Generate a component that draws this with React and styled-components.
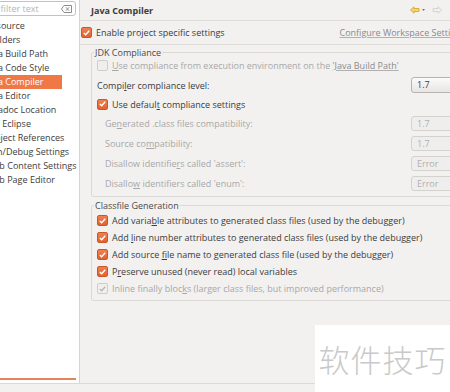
import React from "react";
import styled, { createGlobalStyle } from "styled-components";

const GlobalStyle = createGlobalStyle`
  html, body {
    margin: 0;
    padding: 0;
    background: #f2f1f0;
  }
  body {
    font-family: "Open Sans", "DejaVu Sans", sans-serif;
    font-size: 9px;
    color: #3c3c3c;
  }
  u {
    text-decoration-thickness: 1px;
    text-underline-offset: 1px;
  }
`;

const Window = styled.div`
  position: relative;
  width: 450px;
  height: 392px;
  display: flex;
  flex-direction: column;
  overflow: hidden;
  background: #f2f1f0;
`;

const Body = styled.div`
  display: flex;
  height: 383px;
`;

const BottomBar = styled.div`
  flex: 1;
  background: #f2f1f0;
  border-top: 1px solid #dcdad6;
`;

// left tree, scrolled so that its left part is cut away
const Sidebar = styled.div`
  width: 79px;
  flex: none;
  background: #fff;
  border-right: 1px solid #d6d4d0;
  display: flex;
  flex-direction: column;
  overflow: hidden;
`;

const Filter = styled.div`
  margin: 1px 3px 0 -26px;
  height: 13px;
  border: 1px solid #c4c2be;
  border-radius: 3px;
  display: flex;
  align-items: center;
  justify-content: space-between;
  padding: 0 3px 0 5px;
  color: #b4b4b4;
  flex: none;
`;

const Tree = styled.div`
  margin-top: 3px;
  margin-left: ${(p) => p.shift}px;
  display: flex;
  flex-direction: column;
`;

const TreeRow = styled.div`
  height: 14px;
  line-height: 14px;
  white-space: nowrap;
  padding-left: 3px;
  margin-right: ${(p) => -p.shift}px;
  background: ${(p) => (p.selected ? "#f07746" : "transparent")};
  color: ${(p) => (p.selected ? "#fff" : "#3c3c3c")};
`;

const ScrollThumb = styled.div`
  margin-top: auto;
  margin-bottom: 3px;
  height: 2px;
  width: 76px;
  background: #e8825a;
`;

const Main = styled.div`
  flex: 1;
  overflow: hidden;
  display: flex;
  flex-direction: column;
`;

const Inner = styled.div`
  width: 392px;
  display: flex;
  flex-direction: column;
`;

const Header = styled.div`
  height: 20px;
  display: flex;
  align-items: center;
  justify-content: space-between;
  padding: 0 8px 0 11px;
  border-bottom: 1px solid #dedcd8;
  width: 351px;
`;

const Title = styled.div`
  font-weight: 700;
`;

const Nav = styled.div`
  display: flex;
  align-items: center;
  gap: 4px;
`;

const TopRow = styled.div`
  display: flex;
  align-items: center;
  justify-content: space-between;
  padding: 5px 0 5px 1px;
  border-bottom: 1px solid #dedcd8;
`;

const Link = styled.span`
  color: #8a8a8a;
  text-decoration: underline;
  text-decoration-color: #b0b0b0;
  white-space: nowrap;
`;

const Group = styled.fieldset`
  margin: ${(p) => p.top}px 0 0 11px;
  padding: 0 5px 3px 5px;
  border: 1px solid #dcdad6;
  border-radius: 2px;
  min-width: 0;
  & > legend {
    padding: 0 1px;
    margin-left: -3px;
    color: #4a4a4a;
  }
`;

const CheckRow = styled.label`
  display: flex;
  align-items: center;
  gap: 4px;
  height: ${(p) => p.h || 17}px;
  margin-bottom: ${(p) => p.after || 0}px;
  color: ${(p) => (p.disabled ? "#a8a8a8" : "#3c3c3c")};
  white-space: nowrap;
`;

const Box = styled.span`
  width: 9px;
  height: 9px;
  flex: none;
  border-radius: 2px;
  border: 1px solid ${(p) => (p.disabled ? "#cfcdc9" : p.checked ? "#c8582a" : "#b0aea9")};
  background: ${(p) =>
    p.disabled ? "#f0efed" : p.checked ? "linear-gradient(#f08050, #e0632f)" : "#fff"};
  display: flex;
  align-items: center;
  justify-content: center;
`;

const FieldRow = styled.div`
  display: flex;
  align-items: center;
  justify-content: space-between;
  height: 20px;
  padding-left: ${(p) => p.indent || 0}px;
  color: ${(p) => (p.disabled ? "#a8a8a8" : "#3c3c3c")};
  white-space: nowrap;
`;

const Combo = styled.div`
  width: 48px;
  height: ${(p) => (p.disabled ? 13 : 14)}px;
  border: 1px solid ${(p) => (p.disabled ? "#d4d2ce" : "#b6b4b0")};
  border-radius: 3px;
  background: ${(p) =>
    p.disabled ? "#efeeec" : "linear-gradient(#fbfbfa, #e6e5e2)"};
  color: ${(p) => (p.disabled ? "#b0b0b0" : "#3c3c3c")};
  line-height: ${(p) => (p.disabled ? 13 : 14)}px;
  padding-left: 5px;
`;

const Watermark = styled.div`
  position: absolute;
  left: 315px;
  top: 325px;
  width: 135px;
  height: 67px;
  background: #fff;
  display: flex;
  align-items: center;
  justify-content: center;
  font-family: "Noto Sans CJK SC", sans-serif;
  font-weight: 300;
  font-size: 31px;
  letter-spacing: 1px;
  color: #c9c9c9;
`;

const Check = ({ checked, disabled }) => (
  <Box checked={checked} disabled={disabled}>
    {checked && (
      <svg width="7" height="6" viewBox="0 0 7 6">
        <path
          d="M0.8 3 L2.7 4.8 L6.2 0.8"
          fill="none"
          stroke={disabled ? "#b8b8b8" : "#fff"}
          strokeWidth="1.4"
        />
      </svg>
    )}
  </Box>
);

const treeItems = [
  "Resource",
  "Builders",
  "Java Build Path",
  "Java Code Style",
  "Java Compiler",
  "Java Editor",
  "Javadoc Location",
  "JDT Eclipse",
  "Project References",
  "Run/Debug Settings",
  "Web Content Settings",
  "Web Page Editor",
];

const classfile = [
  <>Add varia<u>b</u>le attributes to generated class files (used by the debugger)</>,
  <>Add <u>l</u>ine number attributes to generated class files (used by the debugger)</>,
  <>Add source <u>f</u>ile name to generated class file (used by the debugger)</>,
  <>P<u>r</u>eserve unused (never read) local variables</>,
];

const disabledFields = [
  [<>Ge<u>n</u>erated .class files compatibility:</>, "1.7"],
  [<>Source co<u>m</u>patibility:</>, "1.7"],
  [<>Disallow identifie<u>r</u>s called 'assert':</>, "Error"],
  [<>Disallo<u>w</u> identifiers called 'enum':</>, "Error"],
];

export default function App() {
  return (
    <Window>
      <GlobalStyle />
      <Body>
        <Sidebar>
          <Filter>
            <span>type filter text</span>
            <svg width="11" height="8" viewBox="0 0 11 8">
              <path d="M3 0.5 H10.5 V7.5 H3 L0.5 4 Z" fill="none" stroke="#8c8c8c" />
              <path d="M5 2.3 L8 5.7 M8 2.3 L5 5.7" stroke="#8c8c8c" />
            </svg>
          </Filter>
          <Tree shift={-17}>
            {treeItems.map((t) => (
              <TreeRow key={t} shift={-17} selected={t === "Java Compiler"}>
                {t}
              </TreeRow>
            ))}
          </Tree>
          <ScrollThumb />
        </Sidebar>
        <Main>
          <Inner>
            <Header>
              <Title>Java Compiler</Title>
              <Nav>
                <svg width="18" height="8" viewBox="0 0 18 8">
                  <path d="M0.5 4 L4 0.8 V2.5 H9 V5.5 H4 V7.2 Z" fill="#f6d66a" stroke="#d4a020" strokeWidth="0.8" />
                  <path d="M12 3 L15 3 L13.5 5 Z" fill="#777" />
                </svg>
                <svg width="10" height="8" viewBox="0 0 10 8">
                  <path d="M9.5 4 L6 0.8 V2.5 H1 V5.5 H6 V7.2 Z" fill="#f0efed" stroke="#cfcdc9" strokeWidth="0.8" />
                </svg>
              </Nav>
            </Header>
            <TopRow>
              <CheckRow h={12}>
                <Check checked />
                <span>Enable pro<u>j</u>ect specific settings</span>
              </CheckRow>
              <Link>Configure Workspace Settings...</Link>
            </TopRow>
            <Group top={1}>
              <legend>JDK Compliance</legend>
              <CheckRow disabled h={13} after={3}>
                <Check disabled />
                <span>
                  <u>U</u>se compliance from execution environment on the{" "}
                  <Link>'Java Build Path'</Link>
                </span>
              </CheckRow>
              <FieldRow>
                <span>Compi<u>l</u>er compliance level:</span>
                <Combo>1.7</Combo>
              </FieldRow>
              <CheckRow h={18}>
                <Check checked />
                <span>Use defaul<u>t</u> compliance settings</span>
              </CheckRow>
              {disabledFields.map(([label, value], i) => (
                <FieldRow key={i} disabled indent={8}>
                  <span>{label}</span>
                  <Combo disabled>{value}</Combo>
                </FieldRow>
              ))}
            </Group>
            <Group top={2}>
              <legend>Classfile Generation</legend>
              {classfile.map((label, i) => (
                <CheckRow key={i}>
                  <Check checked />
                  <span>{label}</span>
                </CheckRow>
              ))}
              <CheckRow disabled>
                <Check checked disabled />
                <span>
                  Inline finally bloc<u>k</u>s (larger class files, but improved performance)
                </span>
              </CheckRow>
            </Group>
          </Inner>
        </Main>
      </Body>
      <BottomBar />
      <Watermark>软件技巧</Watermark>
    </Window>
  );
}
